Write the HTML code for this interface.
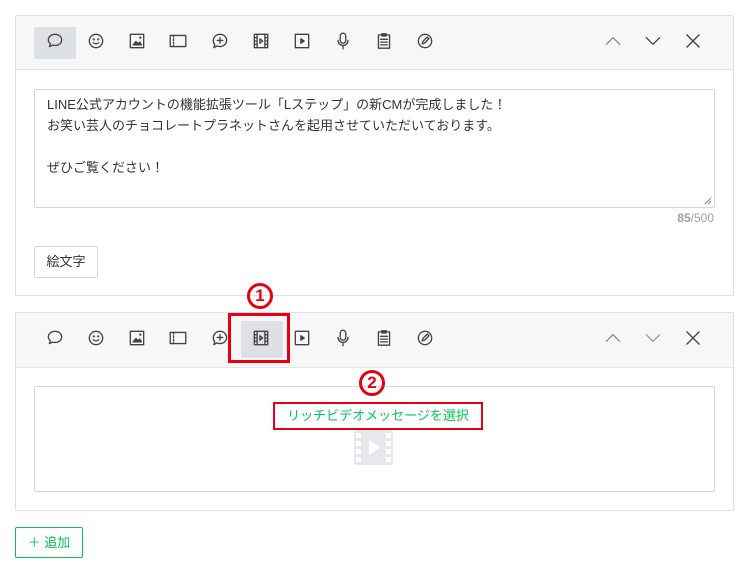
<!DOCTYPE html>
<html><head><meta charset="utf-8"><style>
*{margin:0;padding:0;box-sizing:border-box}
body{width:745px;height:571px;background:#fff;position:relative;font-family:"Liberation Sans","Noto Sans CJK JP",sans-serif;color:#333;overflow:hidden}
.a{position:absolute}
.card{position:absolute;left:15px;width:719px;border:1px solid #dde1e6;border-radius:2px;background:#fff}
.tb{position:absolute;left:0;right:0;top:0;background:#f7f7f7;border-bottom:1px solid #e3e6ea}
.ic{position:absolute;width:20px;height:20px;transform:translate(-10px,-10px)}
.ic svg{width:20px;height:20px;fill:none;stroke:#444;stroke-width:1.2;stroke-linecap:round;stroke-linejoin:round}
.act{position:absolute;background:#dde1e6;border-radius:2px}
.ta{position:absolute;border:1px solid #d5d9de;border-radius:2px;background:#fff}
.num{position:absolute;width:26px;height:26px;border:3px solid #e60012;border-radius:50%;color:#e60012;font-weight:bold;font-size:17px;line-height:20px;text-align:center}
</style></head><body>

<div class="card" style="top:15px;height:281px">
  <div class="tb" style="height:54px"></div>
  <div class="act" style="left:18px;top:11px;width:42px;height:32px"></div>
</div>
<div class="card" style="top:312px;height:199px">
  <div class="tb" style="height:55px"></div>
  <div class="act" style="left:225px;top:8px;width:42px;height:37px"></div>
</div>

<div class="ta" style="left:34px;top:89px;width:681px;height:119px"></div>
<div class="a" style="left:47px;top:94px;font-size:13px;line-height:21px;color:#333;white-space:pre">LINE公式アカウントの機能拡張ツール「Lステップ」の新CMが完成しました！
お笑い芸人のチョコレートプラネットさんを起用させていただいております。

ぜひご覧ください！</div>
<svg class="a" style="left:704px;top:197px" width="8" height="8"><path d="M1 7L7 1M4 7L7 4" stroke="#888" stroke-width="1"/></svg>
<div class="a" style="left:640px;top:211px;width:74px;text-align:right;font-size:12px;color:#9aa3ad"><b>85</b>/500</div>
<div class="a" style="left:34px;top:246px;width:64px;height:32px;border:1px solid #d5d9de;border-radius:2px;font-size:13px;line-height:30px;text-align:center">絵文字</div>

<div class="ta" style="left:34px;top:386px;width:681px;height:106px"></div>
<svg class="a" style="left:354px;top:430px" width="39" height="35"><rect x="0" y="0" width="39" height="35" rx="3" fill="#e6e8eb"/><g fill="#fff"><rect x="2" y="3" width="5" height="5"/><rect x="2" y="11" width="5" height="5"/><rect x="2" y="19" width="5" height="5"/><rect x="2" y="27" width="5" height="5"/><rect x="32" y="3" width="5" height="5"/><rect x="32" y="11" width="5" height="5"/><rect x="32" y="19" width="5" height="5"/><rect x="32" y="27" width="5" height="5"/><path d="M15 10L26 17.5L15 25Z"/></g></svg>
<div class="a" style="left:273px;top:402px;width:210px;height:28px;border:2px solid #e60012;background:#fff"></div>
<div class="a" style="left:273px;top:402px;width:210px;height:28px;line-height:28px;text-align:center;font-size:13px;color:#06c755">リッチビデオメッセージを選択</div>
<div class="a" style="left:228px;top:313px;width:62px;height:50px;border:3px solid #e60012"></div>
<div class="num" style="left:247px;top:283px">1</div>
<div class="num" style="left:359px;top:370px">2</div>

<div class="a" style="left:15px;top:527px;width:68px;height:31px;border:1px solid #06c755;border-radius:2px;color:#06c755;font-size:13px;line-height:29px;text-align:center">＋ 追加</div>

<div id="t1"></div>
<script>
const icons=[
'<path d="M9 3c3.6 0 6 2.2 6 5s-2.4 5-6 5c-.8 0-1.5-.1-2.1-.3L4 14l.8-2.6C3.7 10.5 3 9.3 3 8c0-2.8 2.4-5 6-5z"/>',
'<circle cx="9" cy="9" r="6"/><circle cx="7" cy="7.5" r=".4"/><circle cx="11" cy="7.5" r=".4"/><path d="M6.5 10.5c1.3 1.4 3.7 1.4 5 0"/>',
'<rect x="3" y="3" width="12" height="12"/><path d="M5.5 12.5L8 9.5l2 2 1.5-1.5 1.5 2.5z" fill="#444"/><circle cx="12" cy="6" r=".5"/>',
'<rect x="2" y="4" width="14" height="10"/><path d="M5 4v10" stroke-dasharray="1.5 1.5"/>',
'<path d="M9 3c3.3 0 6 2.5 6 5.5S12.3 14 9 14c-1 0-2-.2-2.8-.6L3.5 15l.8-2.5C3.5 11.5 3 10.1 3 8.5 3 5.5 5.7 3 9 3z"/><path d="M9 6v5M6.5 8.5h5"/>',
'<rect x="3" y="3" width="12" height="12"/><path d="M5.5 3v12M12.5 3v12M3 6h2.5M3 9h2.5M3 12h2.5M12.5 6H15M12.5 9H15M12.5 12H15M8 7l2.5 2L8 11z"/>',
'<rect x="3" y="3" width="12" height="12"/><path d="M8 7l3 2-3 2z" fill="#444"/>',
'<rect x="6.5" y="2" width="5" height="9" rx="2.5"/><path d="M4.5 8.5a4.5 4.5 0 0 0 9 0M9 13v3"/>',
'<rect x="4" y="3.5" width="10" height="12"/><rect x="7" y="2.5" width="4" height="2"/><path d="M6 7.5h6M6 10h6M6 12.5h6"/>',
'<circle cx="9" cy="9" r="6"/><path d="M6.5 11.5l.5-2 4-4 1.5 1.5-4 4z"/>'];
const xs=[55,96,137,178,220,261,302,343,384,425];
let h='';
[41,338].forEach((y,k)=>{
 xs.forEach((x,i)=>{h+=`<div class="ic" style="left:${x}px;top:${y}px"><svg viewBox="0 0 18 18">${icons[i]}</svg></div>`;});
 h+=`<div class="ic" style="left:613px;top:${y}px"><svg viewBox="0 0 18 18" style="stroke:#888"><path d="M3 12l6-6 6 6"/></svg></div>`;
 h+=`<div class="ic" style="left:653px;top:${y}px"><svg viewBox="0 0 18 18" style="stroke:${k?'#999':'#444'}"><path d="M3 6l6 6 6-6"/></svg></div>`;
 h+=`<div class="ic" style="left:693px;top:${y}px"><svg viewBox="0 0 18 18"><path d="M3.5 3.5l11 11M14.5 3.5l-11 11"/></svg></div>`;
});
document.getElementById('t1').innerHTML=h;
</script>
</body></html>
